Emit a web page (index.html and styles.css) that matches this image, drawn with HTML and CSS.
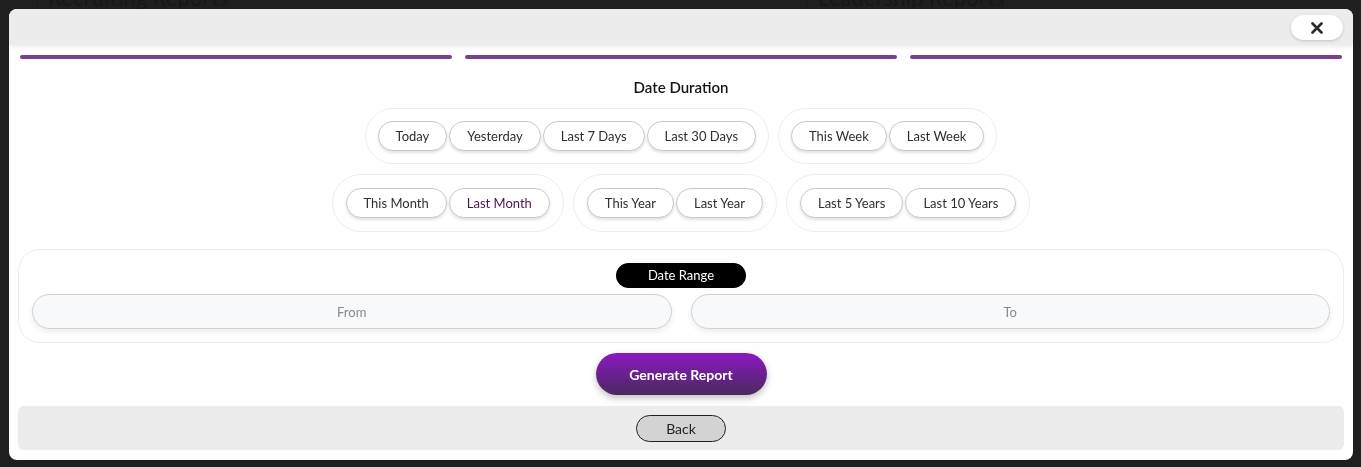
FILE: index.html
```html
<!DOCTYPE html>
<html lang="en">
<head>
  <meta charset="UTF-8">
  <title>Generate Report</title>
  <link rel="stylesheet" href="styles.css">
</head>
<body>
  <div class="page">
    <div class="page-card"><h2>Recruiting Reports</h2></div>
    <div class="page-card"><h2>Leadership Reports</h2></div>
  </div>

  <div class="overlay">
    <div class="modal">
      <div class="modal-header">
        <button class="close-btn" aria-label="Close">
          <svg width="12" height="12" viewBox="0 0 12 12">
            <path d="M1.5 1.5 L10.5 10.5 M10.5 1.5 L1.5 10.5" stroke="#2b2b2b" stroke-width="2.6" stroke-linecap="round"/>
          </svg>
        </button>
      </div>

      <div class="steps">
        <span class="step"></span>
        <span class="step"></span>
        <span class="step"></span>
      </div>

      <div class="modal-body">
        <h3 class="section-title">Date Duration</h3>

        <div class="preset-row">
          <div class="preset-group">
            <button class="chip">Today</button>
            <button class="chip">Yesterday</button>
            <button class="chip">Last 7 Days</button>
            <button class="chip">Last 30 Days</button>
          </div>
          <div class="preset-group">
            <button class="chip">This Week</button>
            <button class="chip">Last Week</button>
          </div>
        </div>

        <div class="preset-row">
          <div class="preset-group">
            <button class="chip">This Month</button>
            <button class="chip chip-hover">Last Month</button>
          </div>
          <div class="preset-group">
            <button class="chip">This Year</button>
            <button class="chip">Last Year</button>
          </div>
          <div class="preset-group">
            <button class="chip">Last 5 Years</button>
            <button class="chip">Last 10 Years</button>
          </div>
        </div>

        <div class="range-box">
          <span class="range-label">Date Range</span>
          <div class="range-inputs">
            <input type="text" class="range-input" placeholder="From">
            <input type="text" class="range-input" placeholder="To">
          </div>
        </div>

        <div class="actions">
          <button class="generate-btn">Generate Report</button>
        </div>

        <div class="modal-footer">
          <button class="back-btn">Back</button>
        </div>
      </div>
    </div>
  </div>
</body>
</html>
```

FILE: styles.css
```css
body {
  margin: 0;
  font-family: Lato, "Open Sans", sans-serif;
  background: #202020;
  height: 467px;
  overflow: hidden;
}

/* page behind the modal */
.page {
  display: grid;
  grid-template-columns: 770px 1fr;
  margin-left: 37px;
  margin-top: -16px;
}

.page-card {
  border-left: 1px solid #141414;
  height: 500px;
  padding-left: 10px;
}

.page-card h2 {
  margin: 0;
  font-size: 22px;
  font-weight: 600;
  color: #0e0e0e;
}

.overlay {
  position: fixed;
  inset: 0;
  background: rgba(32, 32, 32, 0.6);
}

.modal {
  width: 1344px;
  margin: 9px 0 0 9px;
  height: 451px;
  background: #fff;
  border-radius: 8px;
  overflow: hidden;
  box-sizing: border-box;
}

.modal-header {
  height: 36px;
  background: #ececec;
  box-shadow: 0 2px 4px rgba(0, 0, 0, 0.08);
  display: flex;
  align-items: center;
  justify-content: flex-end;
  padding-right: 10px;
  position: relative;
}

.close-btn {
  width: 52px;
  height: 25px;
  border: none;
  border-radius: 13px;
  background: #fff;
  box-shadow: 0 1px 3px rgba(0, 0, 0, 0.18);
  display: flex;
  align-items: center;
  justify-content: center;
  padding: 0;
  margin-top: 1px;
}

.steps {
  display: flex;
  gap: 13px;
  padding: 10px 11px 0;
}

.step {
  flex: 1;
  height: 4px;
  border-radius: 2px;
  background: #7b3f91;
}

.modal-body {
  padding: 0 9px;
}

.section-title {
  margin: 18px 0 11px;
  text-align: center;
  font-size: 15px;
  font-weight: 600;
  color: #151515;
  line-height: 20px;
}

.preset-row {
  display: flex;
  justify-content: center;
  gap: 9px;
  margin-bottom: 10px;
}

.preset-group {
  display: flex;
  gap: 2px;
  padding: 12px 12px;
  border: 1px solid #ededed;
  border-radius: 29px;
}

.preset-row + .preset-row .preset-group {
  padding: 13px 13px;
}

.chip {
  height: 30px;
  padding: 0 17px;
  border: 1px solid #c9c9c9;
  border-radius: 15px;
  background: #fff;
  box-shadow: 0 2px 3px rgba(0, 0, 0, 0.12);
  font-family: inherit;
  font-size: 13px;
  color: #2f2f2f;
}

.chip-hover {
  color: #4a154f;
}

.range-box {
  margin-top: 17px;
  border: 1px solid #ececec;
  border-radius: 22px;
  padding: 13px 13px 13px;
  display: flex;
  flex-direction: column;
  align-items: center;
  gap: 6px;
}

.range-label {
  background: #000;
  color: #fff;
  font-size: 13px;
  width: 130px;
  height: 25px;
  line-height: 25px;
  text-align: center;
  border-radius: 13px;
}

.range-inputs {
  display: flex;
  gap: 19px;
  width: 100%;
}

.range-input {
  flex: 1;
  height: 35px;
  box-sizing: border-box;
  border: 1px solid #d2d2d2;
  border-radius: 18px;
  background: #f8f9fb;
  box-shadow: 0 3px 6px rgba(0, 0, 0, 0.07);
  text-align: center;
  font-family: inherit;
  font-size: 13px;
  outline: none;
}

.range-input::placeholder {
  color: #8a8a8a;
}

.actions {
  display: flex;
  justify-content: center;
  margin: 10px 0 11px;
}

.generate-btn {
  width: 171px;
  height: 42px;
  border: none;
  border-radius: 21px;
  background: linear-gradient(#8b18c2, #4a2a5e);
  color: #fff;
  font-family: inherit;
  font-size: 14px;
  font-weight: 700;
  box-shadow: 0 3px 7px rgba(0, 0, 0, 0.25);
}

.modal-footer {
  background: #ececec;
  border-radius: 6px;
  height: 44px;
  display: flex;
  align-items: center;
  justify-content: center;
}

.back-btn {
  width: 90px;
  height: 27px;
  border: 1px solid #1f1f1f;
  border-radius: 14px;
  background: #d3d3d3;
  font-family: inherit;
  font-size: 14px;
  color: #222;
  margin-top: 1px;
}
```
